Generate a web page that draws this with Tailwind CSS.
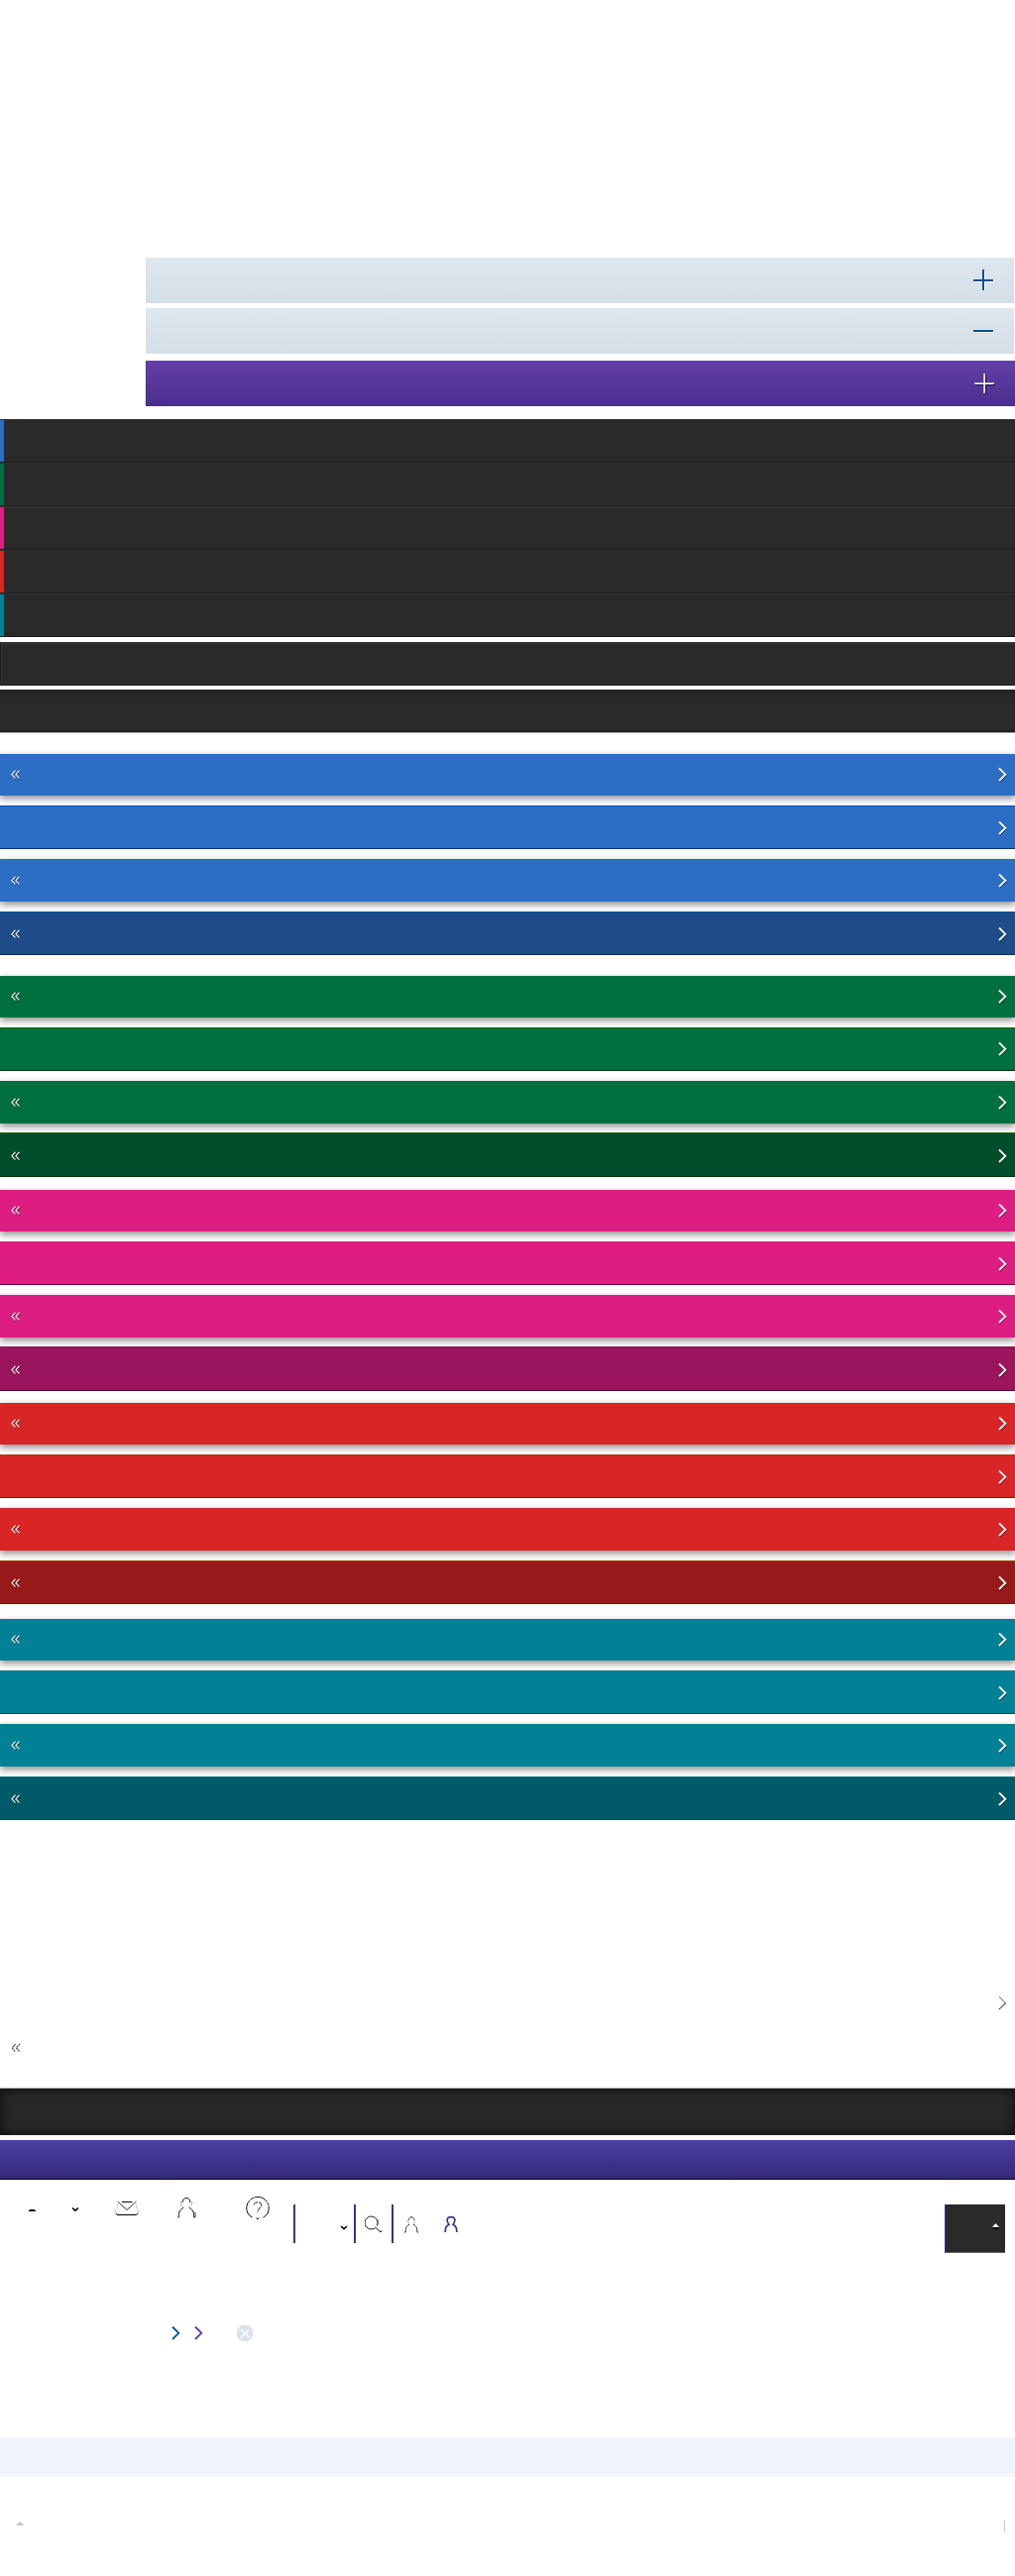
<!DOCTYPE html>
<html lang="en">
<head>
<meta charset="utf-8">
<meta name="viewport" content="width=device-width, initial-scale=1">
<title>Navigation</title>
<script src="https://cdn.jsdelivr.net/npm/@tailwindcss/browser@4"></script>
</head>
<body class="bg-white font-['Liberation_Sans',sans-serif]">
<svg class="hidden" aria-hidden="true">
  <symbol id="next" viewBox="0 0 10 16">
    <path d="M1.5 2.5L7.5 8.8L1.5 15" fill="none" stroke="#000" stroke-opacity=".65" stroke-width="1.6"/>
    <path d="M1 1.5L7.3 7.8L1 14" fill="none" stroke="#fff" stroke-width="1.8"/>
  </symbol>
  <symbol id="back" viewBox="0 0 10 10">
    <path d="M5 1.5L1.8 5.5L5 9.5M9 1.5L5.8 5.5L9 9.5" fill="none" stroke="#000" stroke-opacity=".7" stroke-width="1.2"/>
    <path d="M4.5 .8L1 4.7L4.5 8.6M8.5 .8L5 4.7L8.5 8.6" fill="none" stroke="#e4e4e4" stroke-width="1.3"/>
  </symbol>
  <symbol id="chevron" viewBox="0 0 10 16">
    <path d="M1 1.5L7.3 7.8L1 14" fill="none" stroke="currentColor" stroke-width="1.8"/>
  </symbol>
  <symbol id="caret" viewBox="0 0 8 6">
    <path d="M1 1L4 3.6L7 1" fill="none" stroke="#000" stroke-width="1.6"/>
  </symbol>
</svg>

<main class="pt-[260px]">
  <!-- Accordion headers -->
  <section class="ml-[147px]">
    <button aria-label="Expand" class="mr-px flex h-[46px] w-[calc(100%-1px)] items-center justify-end bg-linear-to-b from-[#dfe7ee] to-[#d4dfe7] pr-[19px]">
      <svg class="h-[22px] w-[22px]" viewBox="0 0 22 22"><path d="M1 12.5H21M11.5 2V22" stroke="#fff"/><path d="M0 11H20M10 0V21" stroke="#004f8b" stroke-width="2"/></svg>
    </button>
    <button aria-label="Collapse" class="mt-[5px] flex h-[46px] w-[calc(100%-1px)] items-center justify-end bg-linear-to-b from-[#dfe7ee] to-[#d4dfe7] pr-[19px]">
      <svg class="h-[22px] w-[22px]" viewBox="0 0 22 22"><path d="M1 12.5H21" stroke="#fff"/><path d="M0 11H20" stroke="#004f8b" stroke-width="2"/></svg>
    </button>
    <button aria-label="Expand" class="mt-[7px] flex h-[46px] w-full items-center justify-end bg-linear-to-b from-[#633fab] to-[#4a2f8b] pr-[19px] shadow-[-1px_0_0_#eeeeee]">
      <svg class="h-[22px] w-[22px]" viewBox="0 0 22 22"><path d="M1 12.5H21M11.5 2V22" stroke="#1c0b4d"/><path d="M0 11H20M10 1V21" stroke="#bbb" stroke-width="2"/><path d="M1 11.5H19M10.5 2V20" stroke="#fff"/></svg>
    </button>
  </section>

  <!-- Main menu -->
  <nav class="mt-[13px] flex flex-col">
    <a href="#" aria-label="Blue" class="h-11 border-y border-t-[#333333] border-b-[#1d1d1d] bg-[#2a2a2a]"><span class="block h-full w-1 bg-[#2b6ec4]"></span></a>
    <a href="#" aria-label="Green" class="h-11 border-y border-t-[#333333] border-b-[#1d1d1d] bg-[#2a2a2a]"><span class="block h-full w-1 bg-[#006f3f]"></span></a>
    <a href="#" aria-label="Pink" class="h-11 border-y border-t-[#333333] border-b-[#1d1d1d] bg-[#2a2a2a]"><span class="block h-full w-1 bg-[#dd1d82]"></span></a>
    <a href="#" aria-label="Red" class="h-11 border-y border-t-[#333333] border-b-[#1d1d1d] bg-[#2a2a2a]"><span class="block h-full w-1 bg-[#d92525]"></span></a>
    <a href="#" aria-label="Teal" class="h-11 border-y border-t-[#333333] border-b-[#1d1d1d] bg-[#2a2a2a]"><span class="block h-full w-1 bg-[#008196]"></span></a>
  </nav>
  <div class="mt-[5px] border-l border-[#1d1d1d]"><div class="h-11 border-t-2 border-b border-l border-t-[#333333] border-b-[#1d1d1d] border-l-[#333333] bg-[#2a2a2a]"></div></div>
  <div class="h-1 bg-[#fafafa]"></div>
  <div class="h-11 border-b border-[#aaaaaa] bg-[linear-gradient(#202020,#2a2a2a_10px)] shadow-[inset_0_-2px_0_#202020]"></div>

  <!-- Blue -->
  <nav class="mt-[21px] grid gap-2.5">
    <a href="#" aria-label="Back" class="flex h-[42px] items-center justify-between bg-[#2b6ec4] pr-[7px] pl-[11px] shadow-[0_3px_7px_rgba(0,0,0,0.45)]"><svg class="h-2.5 w-2.5"><use href="#back"/></svg><svg class="h-4 w-2.5"><use href="#next"/></svg></a>
    <a href="#" aria-label="Next" class="relative flex h-11 items-center justify-end border-y border-t-[#0050b4] border-b-[#06306c] bg-[#2b6ec4] pt-0.5 pr-[7px]"><svg class="h-4 w-2.5"><use href="#next"/></svg></a>
    <a href="#" aria-label="Back" class="flex h-[43px] items-center justify-between bg-[#2b6ec4] pr-[7px] pl-[11px] shadow-[0_3px_7px_rgba(0,0,0,0.45)]"><svg class="h-2.5 w-2.5"><use href="#back"/></svg><svg class="h-4 w-2.5"><use href="#next"/></svg></a>
    <a href="#" aria-label="Back" class="relative flex h-11 items-center justify-between border-y border-t-[#0050b4] border-b-[#06306c] bg-[#1e4c89] pt-0.5 pr-[7px] pl-[11px]"><svg class="h-2.5 w-2.5"><use href="#back"/></svg><svg class="h-4 w-2.5"><use href="#next"/></svg></a>
  </nav>
  <!-- Green -->
  <nav class="mt-[21px] grid gap-2.5">
    <a href="#" aria-label="Back" class="flex h-[42px] items-center justify-between bg-[#006f3f] pr-[7px] pl-[11px] shadow-[0_3px_7px_rgba(0,0,0,0.45)]"><svg class="h-2.5 w-2.5"><use href="#back"/></svg><svg class="h-4 w-2.5"><use href="#next"/></svg></a>
    <a href="#" aria-label="Next" class="relative flex h-11 items-center justify-end border-y border-t-[#006600] border-b-[#003c08] bg-[#006f3f] pr-[7px]"><svg class="h-4 w-2.5"><use href="#next"/></svg></a>
    <a href="#" aria-label="Back" class="flex h-[43px] items-center justify-between bg-[#006f3f] pr-[7px] pl-[11px] shadow-[0_3px_7px_rgba(0,0,0,0.45)]"><svg class="h-2.5 w-2.5"><use href="#back"/></svg><svg class="h-4 w-2.5"><use href="#next"/></svg></a>
    <a href="#" aria-label="Back" class="relative -mt-px flex h-[45px] items-center justify-between border-y border-t-[#006600] border-b-[#003c08] bg-[#004d2c] pt-0.5 pr-[7px] pl-[11px]"><svg class="h-2.5 w-2.5"><use href="#back"/></svg><svg class="h-4 w-2.5"><use href="#next"/></svg></a>
  </nav>
  <!-- Pink -->
  <nav class="mt-[13px] grid gap-2.5">
    <a href="#" aria-label="Back" class="flex h-[42px] items-center justify-between bg-[#dd1d82] pr-[7px] pl-[11px] shadow-[0_3px_7px_rgba(0,0,0,0.45)]"><svg class="h-2.5 w-2.5"><use href="#back"/></svg><svg class="h-4 w-2.5"><use href="#next"/></svg></a>
    <a href="#" aria-label="Next" class="relative flex h-11 items-center justify-end border-y border-t-[#d5177b] border-b-[#660040] bg-[#dd1d82] pt-0.5 pr-[7px]"><svg class="h-4 w-2.5"><use href="#next"/></svg></a>
    <a href="#" aria-label="Back" class="flex h-[43px] items-center justify-between bg-[#dd1d82] pr-[7px] pl-[11px] shadow-[0_3px_7px_rgba(0,0,0,0.45)]"><svg class="h-2.5 w-2.5"><use href="#back"/></svg><svg class="h-4 w-2.5"><use href="#next"/></svg></a>
    <a href="#" aria-label="Back" class="relative -mt-px flex h-[45px] items-center justify-between border-y border-t-[#8f0f55] border-b-[#600038] bg-[#9a155b] pt-0.5 pr-[7px] pl-[11px]"><svg class="h-2.5 w-2.5"><use href="#back"/></svg><svg class="h-4 w-2.5"><use href="#next"/></svg></a>
  </nav>
  <!-- Red -->
  <nav class="mt-3 grid gap-2.5">
    <a href="#" aria-label="Back" class="flex h-[42px] items-center justify-between bg-[#d92525] pr-[7px] pl-[11px] shadow-[0_3px_7px_rgba(0,0,0,0.45)]"><svg class="h-2.5 w-2.5"><use href="#back"/></svg><svg class="h-4 w-2.5"><use href="#next"/></svg></a>
    <a href="#" aria-label="Next" class="relative flex h-11 items-center justify-end border-y border-t-[#a44000] border-b-[#642000] bg-[#d92525] pt-0.5 pr-[7px]"><svg class="h-4 w-2.5"><use href="#next"/></svg></a>
    <a href="#" aria-label="Back" class="flex h-[43px] items-center justify-between bg-[#d92525] pr-[7px] pl-[11px] shadow-[0_3px_7px_rgba(0,0,0,0.45)]"><svg class="h-2.5 w-2.5"><use href="#back"/></svg><svg class="h-4 w-2.5"><use href="#next"/></svg></a>
    <a href="#" aria-label="Back" class="relative flex h-11 items-center justify-between border-y border-t-[#a44000] border-b-[#642000] bg-[#971919] pt-0.5 pr-[7px] pl-[11px]"><svg class="h-2.5 w-2.5"><use href="#back"/></svg><svg class="h-4 w-2.5"><use href="#next"/></svg></a>
  </nav>
  <!-- Teal -->
  <nav class="mt-[15px] grid gap-2.5">
    <a href="#" aria-label="Back" class="flex h-[42px] items-center justify-between bg-[#008196] pr-[7px] pl-[11px] shadow-[0_3px_7px_rgba(0,0,0,0.45)]"><svg class="h-2.5 w-2.5"><use href="#back"/></svg><svg class="h-4 w-2.5"><use href="#next"/></svg></a>
    <a href="#" aria-label="Next" class="relative flex h-11 items-center justify-end border-y border-t-[#007878] border-b-[#004648] bg-[#008196] pt-0.5 pr-[7px]"><svg class="h-4 w-2.5"><use href="#next"/></svg></a>
    <a href="#" aria-label="Back" class="flex h-[43px] items-center justify-between bg-[#008196] pr-[7px] pl-[11px] shadow-[0_3px_7px_rgba(0,0,0,0.45)]"><svg class="h-2.5 w-2.5"><use href="#back"/></svg><svg class="h-4 w-2.5"><use href="#next"/></svg></a>
    <a href="#" aria-label="Back" class="relative flex h-11 items-center justify-between border-y border-t-[#007878] border-b-[#004648] bg-[#005a69] pt-0.5 pr-[7px] pl-[11px]"><svg class="h-2.5 w-2.5"><use href="#back"/></svg><svg class="h-4 w-2.5"><use href="#next"/></svg></a>
  </nav>

  <!-- Plain links -->
  <div class="flex justify-end pt-[177px] pr-[7px]">
    <a href="#" aria-label="Next"><svg class="h-4 w-2.5" viewBox="0 0 10 16"><path d="M1 1.5L7.5 7.8" fill="none" stroke="#555" /><path d="M7.5 7.8L1 14" fill="none" stroke="#444" stroke-width="1.3" stroke-dasharray="2 .5"/></svg></a>
  </div>
  <div class="flex pt-8 pl-[11px]">
    <a href="#" aria-label="Back"><svg class="h-2.5 w-2.5" viewBox="0 0 10 10"><path d="M4.5 1L1.2 5L4.5 9M9 1L5.5 5L9 9" fill="none" stroke="#333" stroke-width="1.1" stroke-dasharray="2 .6"/></svg></a>
  </div>

  <div class="mt-[35px] h-12 border-t border-[#bbbbbb] bg-[#282828] shadow-[inset_0_0_14px_rgba(0,0,0,0.7)]"></div>
  <div class="h-[5px] bg-[#fafafa]"></div>
  <div class="h-10 border-b border-black bg-linear-to-b from-[#4b3fa0] to-[#33297b]"></div>

  <!-- Toolbar -->
  <header class="flex h-[82px] items-start">
    <div class="flex pt-4 pl-7">
      <button aria-label="Up" class="mr-9"><svg class="h-6 w-2" viewBox="0 0 8 24"><path d="M1 16V15L3 14H6L8 15V16Z" fill="#000"/></svg></button>
      <button aria-label="Open" class="mr-9"><svg class="h-6 w-2" viewBox="0 0 8 24"><path d="M1 12.500L4 15.200L7 12.500" fill="none" stroke="#000" stroke-width="1.600"/></svg></button>
      <button aria-label="Mail" class="mr-[38px]"><svg class="h-6 w-6" viewBox="0 0 24 24" fill="none" stroke="#000"><path d="M7 6.500H17.500M1 18L2 19.500H21.500L23 18"/><path d="M2.500 6L12 14.500L21.500 6" stroke-width=".8"/><path d="M.5 14V18M23.500 14V18M2.500 9V13M21.500 9V13" stroke-opacity=".2"/></svg></button>
      <button aria-label="Account" class="mr-[50px]"><svg class="h-6 w-5" viewBox="0 0 20 24" fill="none" stroke="#111" stroke-width="1"><path d="M6 7C6.500 .9 13.500 .9 14 7"/><path d="M4 6L5.500 11M16 6L14.500 11" stroke-opacity=".35"/><path d="M7.500 12C5 13.500 3 15 2.500 18M12.500 12C15 13.500 17 15 17.500 18"/><path d="M2.500 18V22H1M17.500 18V22H19V17" stroke-width=".8"/></svg></button>
      <button aria-label="Help"><svg class="h-6 w-6" viewBox="0 0 24 24" fill="none" stroke="#111" stroke-width="1"><path d="M2 18A11.300 11.300 0 1 1 22 18" stroke-dasharray="14 .8 4 .6"/><path d="M2 18L3.500 20L6.500 22M22 18L20.500 20L17.500 22"/><path d="M8 9.500C9 5.500 16 6 15.700 10C15.500 12.500 12 13 12 17" stroke-dasharray="5 1"/><path d="M10.500 22.500L12 24L13.500 22.500"/></svg></button>
    </div>
    <div class="mt-[25px] ml-6 flex h-[39px] items-center">
      <button aria-label="Options" class="flex h-full w-[61px] items-center justify-end border-l-2 border-[#3b308c] pt-2 pr-1.5"><svg class="h-1.5 w-2"><use href="#caret"/></svg></button>
      <button aria-label="Search" class="flex h-full w-10 items-center justify-center border-x-2 border-[#3b308c]"><svg class="h-[18px] w-[18px]" viewBox="0 0 18 18" fill="none" stroke="#222" stroke-width="1"><path d="M7 14A6.500 6.500 0 1 1 12.500 10" /><path d="M7 14L10.500 13"/><path d="M10.500 12L16 17L17.500 15.500" stroke="#111"/><path d="M13.500 4V9L12 12" stroke-opacity=".4"/></svg></button>
      <button aria-label="Account" class="ml-[11px]"><svg class="h-[18px] w-3.5" viewBox="0 0 14 18" fill="none" stroke="#222" stroke-width=".9"><path d="M4 5C4.500 .6 9.500 .6 10 5"/><path d="M3.500 5L4.500 9M10.500 5L9.500 9" stroke-opacity=".35"/><path d="M5 9.200C2 11 1.200 12 1.200 17H0M9 9.200C12 11 12.800 12 12.800 17H14"/></svg></button>
      <button aria-label="Profile" class="ml-[26px]"><svg class="h-[18px] w-3.5" viewBox="0 0 14 18" fill="none" stroke="#3b308c" stroke-width="1.700"><path d="M1.200 17C1.200 12.500 1.800 11 5 9.300C3.300 7.500 3 6.500 3.200 4.700C3.500 .5 10.500 .5 10.800 4.700C11 6.500 10.700 7.500 9 9.300C12.200 11 12.800 12.500 12.800 17"/></svg></button>
    </div>
    <button aria-label="Menu" class="mt-[25px] mr-2.5 ml-auto flex h-[49px] w-[61px] border-l border-[#3b308c]"><span class="flex h-full w-full justify-end border-b border-[#666666] bg-[#2a2a2a] pt-[18px] pr-1.5"><svg class="h-2 w-2" viewBox="0 0 8 8"><path d="M1 5H8L7 7H2Z" fill="#000"/><path d="M1 5L4.500 1L8 5Z" fill="#fff"/></svg></span></button>
  </header>

  <div class="flex items-center pt-[65px] pl-[173px]">
    <a href="#" aria-label="Next" class="mr-[13px] text-[#005596]"><svg class="h-4 w-2.5"><use href="#chevron"/></svg></a>
    <a href="#" aria-label="Next" class="mr-[33px] text-[#5b3ba6]"><svg class="h-4 w-2.5"><use href="#chevron"/></svg></a>
    <button aria-label="Close"><svg class="h-4 w-4 overflow-visible" viewBox="0 0 16 16"><circle cx="8" cy="8" r="8.400" fill="#d9e2ec"/><path d="M4 4L12.500 12.500M12.500 4L4 12.500" stroke="#fff" stroke-width="1.200"/></svg></button>
  </div>

  <div class="mt-[97px] h-[37px] bg-[#eff5fa]"></div>
  <div class="mt-px h-px bg-[#eeeff3]"></div>
  <footer class="flex items-start justify-between pt-[45px] pr-2.5 pb-10 pl-4">
    <svg class="h-[5px] w-2" viewBox="0 0 8 5"><path d="M0 5L4 1L8 5Z" fill="#c4c4c4"/></svg>
    <span class="h-[11px] w-px bg-[#c4c4c4]"></span>
  </footer>
</main>
</body>
</html>
